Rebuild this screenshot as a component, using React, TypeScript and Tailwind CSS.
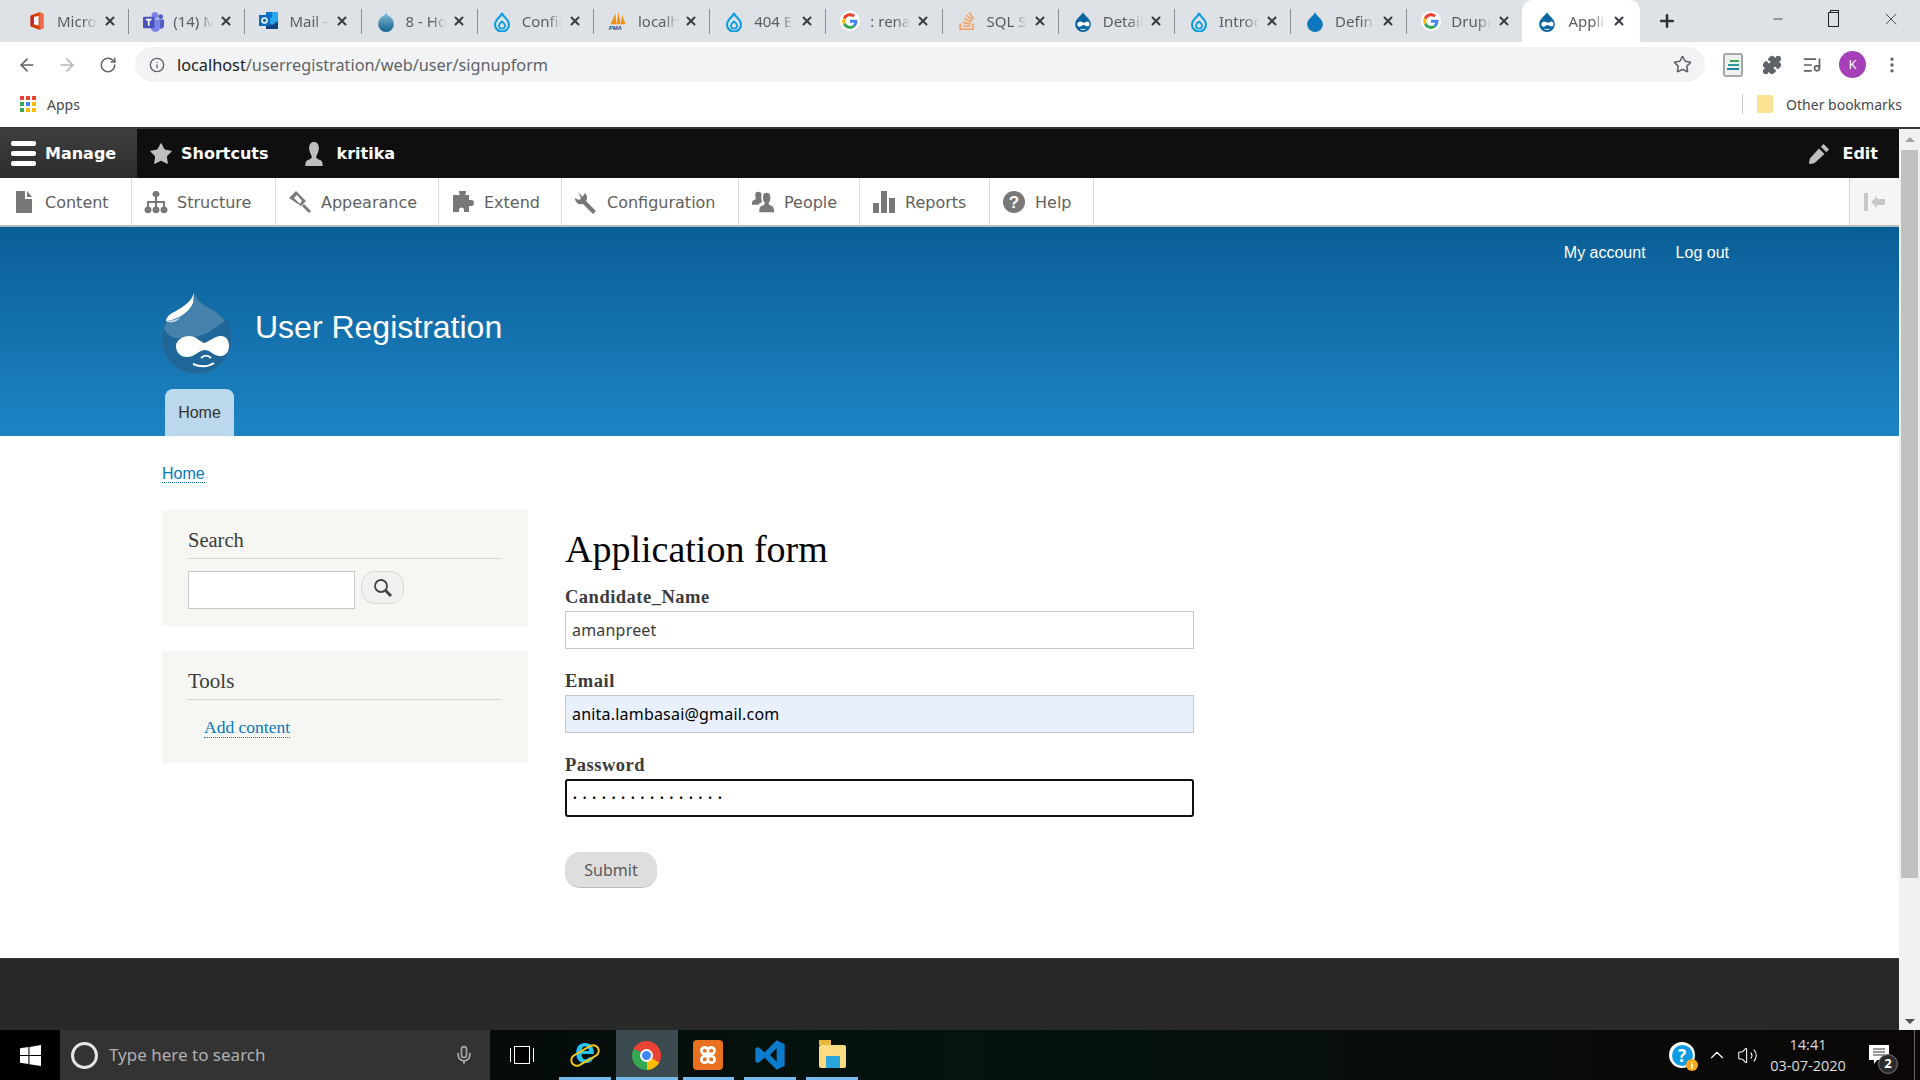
import React from "react";
import { ArrowLeft, ArrowRight, RotateCw, Star, Info, MoreVertical, Plus, Mic, X, Minus, Puzzle, ListMusic, ChevronUp, Volume2 } from "lucide-react";
import { SiStackoverflow } from "react-icons/si";

const GoogleG = () => (
  <svg viewBox="0 0 48 48" className="w-[20px] h-[20px] bg-white rounded-full p-[2px]">
    <path fill="#EA4335" d="M24 9.5c3.5 0 6.7 1.3 9.1 3.5l6.8-6.8C35.800 2.400 30.200 0 24 0 14.600 0 6.500 5.400 2.600 13.200l7.900 6.100C12.400 13.600 17.700 9.500 24 9.500z" />
    <path fill="#4285F4" d="M46.900 24.500c0-1.600-.1-3.100-.4-4.500H24v9h12.900c-.6 3-2.200 5.500-4.700 7.200l7.300 5.700c4.300-4 6.400-9.900 6.400-17.400z" />
    <path fill="#FBBC05" d="M10.500 28.700c-.5-1.500-.8-3-.8-4.700s.3-3.200.8-4.700l-7.900-6.100C.9 16.500 0 20.100 0 24s.9 7.500 2.600 10.800l7.900-6.100z" />
    <path fill="#34A853" d="M24 48c6.500 0 11.900-2.100 15.900-5.800l-7.300-5.700c-2.200 1.500-4.900 2.300-8.600 2.300-6.300 0-11.600-4.100-13.500-9.800l-7.900 6.100C6.500 42.600 14.600 48 24 48z" />
  </svg>
);
const Office = () => (
  <svg viewBox="0 0 20 24" className="w-[16px] h-[20px]">
    <path fill="#d83b01" d="M2 5 13 1l5 2v18l-5 2-11-4z" />
    <path fill="#eb6c4d" d="M13 1l5 2v18l-5 2z" />
    <path fill="#fff" d="M6 7l6-1.500v12L6 16z" />
    <path fill="#c4262e" d="M2 5l4 2v9l-4 3z" />
  </svg>
);
const Teams = () => (
  <svg viewBox="0 0 22 22" className="w-[21px] h-[21px]">
    <circle cx="12.500" cy="4.500" r="3.500" fill="#7b83eb" />
    <circle cx="18.500" cy="6" r="2.500" fill="#5059c9" />
    <path fill="#5059c9" d="M15 9h7v6a3.500 3.500 0 0 1-7 0z" />
    <path fill="#7b83eb" d="M8 9h10v8a5 5 0 0 1-10 0z" />
    <rect x="0" y="6" width="12" height="12" rx="1" fill="#4b53bc" />
    <path fill="none" stroke="#fff" strokeWidth="1.800" d="M3 9h6M6 9v6.500" />
  </svg>
);
const Outlook = () => (
  <svg viewBox="0 0 20 20" className="w-[20px] h-[20px]">
    <rect x="7" y="1" width="12" height="17" fill="#28a8ea" />
    <rect x="7" y="1" width="6" height="6" fill="#0078d4" />
    <path fill="#14447d" d="M7 10l6 4 6-4v8H7z" />
    <rect x="0" y="4" width="11" height="11" fill="#0f6cbd" />
    <circle cx="5.500" cy="9.500" r="2.500" fill="none" stroke="#fff" strokeWidth="1.500" />
  </svg>
);
const DropBall = () => (
  <svg viewBox="0 0 20 24" className="w-[18px] h-[21px]">
    <defs>
      <linearGradient id="dropg" x1="0" y1="0" x2="0" y2="1">
        <stop offset="0" stopColor="#8cc4dc" />
        <stop offset="1" stopColor="#13618f" />
      </linearGradient>
    </defs>
    <path fill="url(#dropg)" d="M10 1c.6 3 2 3.400 4 5 3 2 5 5 5 9a9 9 0 0 1-18 0c0-4 2-7 5-9 2-1.600 3.400-2 4-5z" />
  </svg>
);
const DropBlue = () => (
  <svg viewBox="0 0 20 24" className="w-[18px] h-[21px]">
    <path fill="#0f77bd" d="M10 1c1 4 9 8 9 14a9 9 0 0 1-18 0C1 9 9 5 10 1z" />
  </svg>
);
const DrupalNew = () => (
  <svg viewBox="0 0 20 24" className="w-[18px] h-[21px]" fill="none" stroke="#0c9ee0" strokeWidth="2.400">
    <path d="M10 2c0 4 8 7 8 13.500a8 8 0 0 1-16 0C2 9 10 6 10 2z" />
    <path d="M10 11c0 2-3.500 3-3.500 5.500a3.500 3.500 0 0 0 7 0C13.500 14 10 13 10 11z" strokeWidth="2" />
  </svg>
);
const Pma = () => (
  <svg viewBox="0 0 24 24" className="w-[20px] h-[22px]">
    <path fill="#f29111" d="M3 16 9 3l1 13zM10 16l3-15 2 15zM15 16l2-11 4 11z" />
    <text x="1" y="23" fontSize="7" fontWeight="700" fontStyle="italic" fill="#2a4d8f" fontFamily="Liberation Sans, sans-serif">PMA</text>
  </svg>
);
const Drupal = () => (
  <svg viewBox="0 0 20 24" className="w-[18px] h-[21px]">
    <path fill="#0c659f" d="M10 1c.8 3.500 9 7.500 9 14a9 9 0 0 1-18 0C1 8.500 9 4.500 10 1z" />
    <path fill="#fff" d="M3.500 15c0-2 2-3 3.500-3 2 0 2.500 1.500 4 1.500s2.500-1.500 4-1.500c1.500 0 2.500 1.500 2.500 3 0 2-1.500 3-3 2.500S12 16 10.500 16 7.500 18 6 18c-1.500 0-2.500-1.500-2.500-3z" />
    <path fill="none" stroke="#fff" strokeWidth="1" d="M7 20.500c2 1 4 1 6 0" />
  </svg>
);

const tabs: { icon: React.ReactNode; t: string }[] = [
  { icon: <Office />, t: "Micro" },
  { icon: <Teams />, t: "(14) M" },
  { icon: <Outlook />, t: "Mail -" },
  { icon: <DropBall />, t: "8 - Ho" },
  { icon: <DrupalNew />, t: "Config" },
  { icon: <Pma />, t: "localh" },
  { icon: <DrupalNew />, t: "404 E" },
  { icon: <GoogleG />, t: ": rena" },
  { icon: <SiStackoverflow className="w-[18px] h-[18px] text-[#f4a060]" />, t: "SQL S" },
  { icon: <Drupal />, t: "Detail" },
  { icon: <DrupalNew />, t: "Introd" },
  { icon: <DropBlue />, t: "Defini" },
  { icon: <GoogleG />, t: "Drupa" },
];

const fade = "[mask-image:linear-gradient(to_right,black_65%,transparent)]";

const Tab = ({ icon, t, last }: { icon: React.ReactNode; t: string; last?: boolean }) => (
  <div className="w-[116.200px] h-[42px] shrink-0 flex items-center pl-[12px] relative">
    <div className="w-[24px] flex justify-center shrink-0">{icon}</div>
    <div className={`ml-[8px] w-[40px] overflow-hidden whitespace-nowrap text-[15px] text-[#5a5c60] ${fade}`}>{t}</div>
    <X size={14} strokeWidth={3.500} className="ml-[6px] text-[#3c3e42] shrink-0" />
    {!last && <div className="absolute right-0 top-[9px] h-[25px] w-px bg-[#8b8d90]" />}
  </div>
);

const Wrench = ({ c = "" }: { c?: string }) => (
  <svg viewBox="0 0 24 24" className={c} fill="currentColor">
    <path d="M4 2 9 7v-1l2-3a6 6 0 0 1 1 8l10 10-3 3L9 14a6 6 0 0 1-8-6l4 2 2-2z" />
  </svg>
);
const PersonOne = ({ c = "" }: { c?: string }) => (
  <svg viewBox="0 0 20 24" className={c} fill="currentColor">
    <path d="M10 1c3 0 4.500 2.500 4.500 5.500 0 3-1.500 6-2.500 8 .2 1.500 1 2 3.500 3 2 .8 2.500 2 2.500 5.500H2c0-3.500.5-4.700 2.500-5.500 2.500-1 3.300-1.500 3.500-3-1-2-2.500-5-2.500-8C5.500 3.500 7 1 10 1z" />
  </svg>
);
const Tray = ({ icon, label, w }: { icon: React.ReactNode; label: string; w: number }) => (
  <div style={{ width: w }} className="h-full shrink-0 flex items-center border-r border-[#dcdcdc] pl-[12px] text-[#5f5f5f]">
    <div className="w-[33px] flex shrink-0 text-[#787878]">{icon}</div>
    <span className="text-[16px] mt-[3px] font-['DejaVu_Sans',sans-serif]">{label}</span>
  </div>
);
const ToolbarIconClass = "w-[24px] h-[24px]";

const DrupalLogo = () => (
  <svg viewBox="0 0 72 82" className="w-[72px] h-[82px]">
    <path fill="#4482ac" stroke="#3a6f96" d="M34 1c1 6 6 11 14 15 12 6 22 17 22 31a34.500 34.500 0 0 1-69 0c0-14 9-25 21-31 7-4 11-9 12-15z" />
    <path fill="#1f6699" d="M66 27c3 6 4 13 4 20a34.500 34.500 0 0 1-69 0c0-5 1-8 2-11 3 7 8 11 16 10 14-1 24-1 33-9 6-4 11-7 14-10z" />
    <path fill="#fff" d="M15 54c0-6 7-10 13-10 7 0 10 5 15 7 5-1 10-7 17-7 5 0 8 4 8 10 0 7-5 11-10 10-6-1-9-6-14-6-6 0-10 7-18 7-7 0-11-5-11-11z" />
    <path fill="none" stroke="#fff" strokeWidth="2" d="M32 72c7 3 15 3 21-1M40 66c3-3 7-3 10 0" />
    <path fill="#fff" d="M33 1c-3 10-14 16-22 20-3 2-6 5-6 8 8-1 22-6 27-18z" />
    <path fill="#c5dae8" d="M5 29c5 0 9-1 14-3-3 4-10 6-14 3z" />
  </svg>
);

const Link = ({ children, c = "" }: { children: React.ReactNode; c?: string }) => (
  <a className={`text-[#0678be] border-b border-dotted border-[#0678be] ${c}`}>{children}</a>
);
const serif = "font-['Liberation_Serif',serif]";

const Field = ({ label, children }: { label: string; children: React.ReactNode }) => (
  <div className="flex flex-col">
    <label className={`${serif} font-bold text-[#3b3b3b] text-[18.500px] tracking-[0.5px] leading-[20px] h-[26px] pt-[2px]`}>{label}</label>
    {children}
  </div>
);

const TaskIcon = ({ children, active }: { children: React.ReactNode; active?: boolean }) => (
  <div className={`relative w-[61.800px] h-full flex items-center justify-center ${active ? "bg-[#3b4a4e]" : ""}`}>
    {children}
    <div className={`absolute bottom-0 h-[3px] bg-[#76b9ed] ${active ? "left-0 right-0" : "left-[5px] right-[5px]"}`} />
  </div>
);

export default function App() {
  return (
    <div className="w-[1920px] h-[1080px] overflow-hidden flex flex-col bg-white font-['Noto_Sans',sans-serif]">
      {/* Tab strip */}
      <div className="h-[42px] bg-[#dee1e6] flex shrink-0 pl-[13px]">
        {tabs.map((t, i) => (
          <Tab key={i} icon={t.icon} t={t.t} last={i === tabs.length - 1} />
        ))}
        <div className="w-[118px] h-[42px] bg-white rounded-t-[10px] flex items-center pl-[14px] -ml-[1px] shrink-0">
          <div className="w-[22px] flex justify-center"><Drupal /></div>
          <div className={`ml-[10px] w-[38px] overflow-hidden whitespace-nowrap text-[15px] text-[#5a5c60] ${fade}`}>Applic</div>
          <X size={14} strokeWidth={3.500} className="ml-[6px] text-[#3c3e42]" />
        </div>
        <Plus size={20} strokeWidth={3} className="ml-[17px] mt-[11px] text-[#2f3135]" />
        <div className="ml-auto flex items-start text-[#303236]">
          <Minus size={14} strokeWidth={1.500} className="mt-[12px]" />
          <div className="ml-[43px] mt-[12px] w-[11px] h-[15px] border-[1.500px] border-[#202020] relative bg-[#dee1e6]">
            <div className="absolute -top-[3px] left-[1px] w-[9px] h-[3px] border-t border-x border-[#202020]" />
          </div>
          <X size={20} strokeWidth={1} className="ml-[42px] mt-[9px] mr-[19px]" />
        </div>
      </div>

      {/* Address bar */}
      <div className="h-[45px] flex items-center shrink-0 relative">
        <ArrowLeft size={20} strokeWidth={2} className="ml-[17px] text-[#5f6368]" />
        <ArrowRight size={20} strokeWidth={2} className="ml-[20px] text-[#b4b6b9]" />
        <RotateCw size={18} strokeWidth={2} className="ml-[22px] text-[#5f6368]" />
        <div className="ml-[18px] w-[1570px] h-[35px] rounded-full bg-[#f1f3f4] flex items-center pl-[14px]">
          <Info size={16} className="text-[#5f6368]" />
          <span className="ml-[12px] mt-[1px] text-[16.300px] text-[#5f6368] whitespace-nowrap"><span className="text-[#202124]">localhost</span>/userregistration/web/user/signupform</span>
          <Star size={19} className="ml-auto mr-[13px] text-[#5f6368]" />
        </div>
        <div className="ml-[18px] w-[20px] h-[24px] rounded-[3px] bg-[#eef2ee] border-[2px] border-[#a6a8a8] flex flex-col justify-center items-end gap-[2px] px-[2px]">
          <div className="w-[9px] h-[2px] bg-[#41a35a]" /><div className="w-[11px] h-[2px] bg-[#2e9a9a]" /><div className="w-[12px] h-[2px] bg-[#2a7fa0]" />
        </div>
        <Puzzle size={20} fill="#5f6368" className="ml-[19px] text-[#5f6368]" />
        <ListMusic size={20} className="ml-[20px] text-[#5f6368]" />
        <div className="ml-[17px] w-[27px] h-[27px] rounded-full bg-[#a640b8] text-white text-[13px] flex items-center justify-center">K</div>
        <MoreVertical size={20} className="ml-[16px] text-[#5f6368]" />
      </div>

      {/* Bookmarks */}
      <div className="h-[42px] flex items-center shrink-0 pl-[20px] pb-[6px] border-b-[2px] border-[#3a3a3a]">
        <div className="grid grid-cols-3 gap-[2px] w-[16px]">
          {["#ea4335","#ea4335","#ea4335","#34a853","#4285f4","#fbbc05","#34a853","#fbbc05","#fbbc05"].map((c, i) => (
            <div key={i} className="w-[4px] h-[4px]" style={{ background: c }} />
          ))}
        </div>
        <span className="ml-[11px] text-[14px] text-[#46484c]">Apps</span>
        <div className="ml-auto w-px h-[20px] bg-[#c8c8c8]" />
        <div className="ml-[14px] w-[16px] h-[18px] bg-[#fde293] rounded-[2px]" />
        <span className="ml-[13px] mr-[18px] text-[14px] text-[#46484c]">Other bookmarks</span>
      </div>

      {/* Page + scrollbar */}
      <div className="flex-1 flex min-h-0">
        <div className="w-[1899px] flex flex-col min-h-0 overflow-hidden">
          {/* Admin bar */}
          <div className="h-[49px] bg-[#0f0f0f] flex items-stretch text-white font-bold text-[16px] shrink-0 font-['DejaVu_Sans',sans-serif]">
            <div className="w-[137px] bg-gradient-to-b from-[#3f3f3f] to-[#2d2d2d] flex items-center pl-[11px]">
              <div className="flex flex-col gap-[5px]">
                <div className="w-[25px] h-[5px] rounded-[2px] bg-white" /><div className="w-[25px] h-[5px] rounded-[2px] bg-white" /><div className="w-[25px] h-[5px] rounded-[2px] bg-white" />
              </div>
              <span className="ml-[9px]">Manage</span>
            </div>
            <div className="flex items-center pl-[11px]">
              <Star size={26} fill="#bebebe" strokeWidth={0} />
              <span className="ml-[7px]">Shortcuts</span>
            </div>
            <div className="flex items-center pl-[33px]">
              <PersonOne c="w-[24px] h-[26px] text-[#bebebe]" />
              <span className="ml-[11px]">kritika</span>
            </div>
            <div className="ml-auto flex items-center pr-[21px]">
              <svg viewBox="0 0 24 24" className="w-[22px] h-[22px]" fill="#bebebe"><path d="M17 1l6 6-3 3-6-6zM12 6l6 6L7 22l-5 1-1-1 1-5z" /></svg>
              <span className="ml-[12px]">Edit</span>
            </div>
          </div>
          {/* Tray */}
          <div className="h-[49px] bg-white border-b-[2px] border-[#b8bcbf] flex shrink-0">
            <Tray w={132} label="Content" icon={<svg viewBox="0 0 24 24" className={ToolbarIconClass} fill="currentColor"><path d="M4 1h9v8h7v14H4zM15 1l5 6h-5z" /></svg>} />
            <Tray w={144} label="Structure" icon={<svg viewBox="0 0 24 24" className={ToolbarIconClass} fill="currentColor"><path d="M12 1a3 3 0 0 1 1 6v4h8v5.500a3.500 3.500 0 1 1-2 0V13h-6v3.500a3.500 3.500 0 1 1-2 0V13H5v3.500a3.500 3.500 0 1 1-2 0V11h8V7a3 3 0 0 1 1-6z" /></svg>} />
            <Tray w={163} label="Appearance" icon={<svg viewBox="0 0 24 24" className={ToolbarIconClass} fill="currentColor"><path d="M8 1l10 10-5 5L1 8zM9 5 6 8l6 6 2-3zM14 16l2-2 7 7-2 2z" fillRule="evenodd" /></svg>} />
            <Tray w={123} label="Extend" icon={<svg viewBox="0 0 24 24" className={ToolbarIconClass} fill="currentColor"><path d="M8 1h7v2l-1 2h4v5h2a3 3 0 0 1 0 6h-2v6h-5v-2a2.500 2.500 0 0 0-5 0v2H2V5h7L8 3z" /></svg>} />
            <Tray w={177} label="Configuration" icon={<Wrench c={ToolbarIconClass} />} />
            <Tray w={121} label="People" icon={<svg viewBox="0 0 26 24" className={ToolbarIconClass} fill="currentColor"><path d="M17 2c3 0 4 2 4 5s-1 5-2 6c0 2 1 2 3 3s3 2 3 7H9c0-5 1-6 3-7s3-1 3-3c-1-1-2-3-2-6s1-5 4-5zM8 1c2 0 3 1 3.500 2.500C11 6 11 9 12 12c-1 1-3 1-4 3H1c0-4 1-5 3-5.500C5 9 5 8 5 7 4 3 5 1 8 1z" /></svg>} />
            <Tray w={130} label="Reports" icon={<svg viewBox="0 0 24 24" className={ToolbarIconClass} fill="currentColor"><path d="M1 13h6v10H1zM9 1h6v22H9zM17 8h6v15h-6z" /></svg>} />
            <Tray w={104} label="Help" icon={<svg viewBox="0 0 24 24" className={ToolbarIconClass}><circle cx="12" cy="12" r="11" fill="currentColor" /><text x="12" y="18" textAnchor="middle" fontSize="17" fontWeight="700" fill="#fff" fontFamily="Liberation Sans, sans-serif">?</text></svg>} />
            <div className="ml-auto w-[50px] bg-[#f5f5f5] border-l border-[#d0d0d0] flex items-center justify-center gap-[3px]">
              <div className="w-[4px] h-[18px] bg-[#c8c8c8]" />
              <svg viewBox="0 0 14 12" className="w-[14px] h-[12px]" fill="#c8c8c8"><path d="M0 6 6 0v3h8v6H6v3z" /></svg>
            </div>
          </div>

          {/* Blue header */}
          <div className="h-[209px] shrink-0 bg-gradient-to-b from-[#0a5e97] to-[#1d84c4] px-[162px] flex flex-col relative font-['Liberation_Sans',sans-serif]">
            <div className="flex justify-end gap-[30px] pt-[15px] pr-[8px] text-white text-[16px] leading-[22px]">
              <span>My account</span><span>Log out</span>
            </div>
            <div className="flex items-center mt-[28px] h-[82px] -ml-[1px]">
              <DrupalLogo />
              <span className="ml-[22px] text-[32px] text-white leading-none -mt-[12px]">User Registration</span>
            </div>
            <div className="mt-auto w-[69px] h-[47px] ml-[3px] rounded-t-[8px] bg-[#bcd8ec] flex items-center justify-center text-[16px] text-[#333]">Home</div>
          </div>

          {/* Body */}
          <div className="h-[522px] shrink-0 px-[162px] flex flex-col">
            <div className="pt-[27px] h-[74px] font-['Liberation_Sans',sans-serif] text-[16px] leading-[22px]"><Link>Home</Link></div>
            <div className="flex">
              <aside className={`w-[366px] shrink-0 ${serif} flex flex-col gap-[25px]`}>
                <div className="h-[116px] bg-[#f6f6f2] px-[26px] pt-[19px]">
                  <div className="h-[30px] border-b border-[#d4d4d0] text-[20.500px] leading-[22px] text-[#3b3b3b] w-[313px]">Search</div>
                  <div className="flex mt-[12px]">
                    <div className="w-[167px] h-[38px] bg-white border border-[#c8c8c8]" />
                    <div className="ml-[6px] w-[43px] h-[33px] rounded-[14px] bg-[#f1f1ef] border border-[#d8d8d8] flex items-center justify-center">
                      <svg viewBox="0 0 20 20" className="w-[20px] h-[20px]" fill="none" stroke="#444"><circle cx="8" cy="8" r="6" strokeWidth="1.800" /><path d="M12.500 12.500 18 18" strokeWidth="3" /></svg>
                    </div>
                  </div>
                </div>
                <div className="h-[112px] bg-[#f6f6f2] px-[26px] pt-[19px]">
                  <div className="h-[30px] border-b border-[#d4d4d0] text-[21px] leading-[22px] text-[#3b3b3b] w-[313px]">Tools</div>
                  <div className="pl-[16px] pt-[16px] text-[17.500px] leading-[22px]"><Link>Add content</Link></div>
                </div>
              </aside>
              <main className="ml-[37px] w-[629px] flex flex-col">
                <h1 className={`${serif} text-[38px] leading-[40px] text-black mt-[19px] h-[56px]`}>Application form</h1>
                <Field label="Candidate_Name">
                  <input readOnly value="amanpreet" className="h-[38px] border border-[#c8c8c8] px-[6px] text-[16px] text-[#3b3b3b] outline-none tracking-[0.2px]" />
                </Field>
                <div className="h-[20px]" />
                <Field label="Email">
                  <input readOnly value="anita.lambasai@gmail.com" className="h-[38px] border border-[#c8c8c8] bg-[#e8f0fe] px-[6px] text-[16px] text-black outline-none tracking-[0.2px]" />
                </Field>
                <div className="h-[20px]" />
                <Field label="Password">
                  <input readOnly type="password" value="aaaaaaaaaaaaaaaa" className="h-[38px] border-[2px] border-[#101010] rounded-[3px] px-[6px] text-[10px] text-black outline-none tracking-[5.900px]" />
                </Field>
                <button className="mt-[35px] w-[92px] h-[36px] rounded-[15px] bg-[#dedede] border-b border-[#bcbcbc] text-[16px] text-[#5a5a5a]">Submit</button>
              </main>
            </div>
          </div>

          {/* Footer */}
          <div className="flex-1 bg-[#292929] border-t border-[#333]" />
        </div>
        <div className="w-[21px] bg-[#f1f1f1] flex flex-col items-center relative shrink-0">
          <div className="h-[21px] flex items-center"><div className="w-0 h-0 border-x-[5px] border-x-transparent border-b-[5px] border-b-[#a3a3a3]" /></div>
          <div className="w-[17px] h-[728px] bg-[#c1c1c1]" />
          <div className="mt-auto h-[17px] flex items-center"><div className="w-0 h-0 border-x-[5px] border-x-transparent border-t-[5px] border-t-[#505050]" /></div>
        </div>
      </div>

      {/* Taskbar */}
      <div className="h-[50px] shrink-0 bg-gradient-to-r from-[#050505] via-[#04140f] to-[#0a0706] flex items-stretch text-white">
        <div className="w-[60px] bg-black flex items-center justify-center">
          <svg viewBox="0 0 20 20" className="w-[21px] h-[21px]" fill="#fff"><path d="M0 3l8-1v7.500H0zM9 1.800 20 0v9.500H9zM0 10.500h8V18l-8-1zM9 10.500h11V20L9 18.300z" /></svg>
        </div>
        <div className="w-[430px] bg-[#333333] flex items-center pl-[11px] pr-[16px] text-[#b0b0b0] text-[17px]">
          <div className="w-[27px] h-[27px] rounded-full border-[3px] border-[#e4e4e4]" />
          <span className="ml-[11px] whitespace-nowrap">Type here to search</span>
          <Mic size={20} className="ml-auto text-[#a8a8a8]" />
        </div>
        <div className="w-[64px] flex items-center justify-center">
          <div className="w-[24px] h-[14px] flex items-center justify-center border-x border-white"><div className="w-[16px] h-[18px] border-[1.500px] border-white bg-black" /></div>
        </div>
        <TaskIcon>
          <span className="text-[36px] leading-none font-['Liberation_Sans',sans-serif] text-[#27c4f0] font-bold -mt-[8px]">e</span>
          <div className="absolute w-[32px] h-[13px] rounded-full border-[2px] border-[#f0c419] -rotate-[30deg]" />
        </TaskIcon>
        <TaskIcon active>
          <div className="w-[29px] h-[29px] rounded-full flex items-center justify-center" style={{ background: "conic-gradient(#ea4335 0 33%, #fbbc05 33% 50%, #34a853 50% 83%, #ea4335 83%)" }}>
            <div className="w-[13px] h-[13px] rounded-full bg-[#4285f4] border-[2px] border-white" />
          </div>
        </TaskIcon>
        <TaskIcon>
          <div className="w-[30px] h-[30px] rounded-[4px] bg-[#e8701f] flex items-center justify-center">
            <svg viewBox="0 0 20 20" className="w-[22px] h-[22px]" fill="none" stroke="#fff" strokeWidth="2.500"><path d="M7 3a3 3 0 1 0 0 6h6a3 3 0 1 0-3-3v8a3 3 0 1 0 3-3H7a3 3 0 1 0 3 3V6a3 3 0 0 0-3-3z" /></svg>
          </div>
        </TaskIcon>
        <TaskIcon>
          <svg viewBox="0 0 24 24" className="w-[32px] h-[32px]"><path fill="#0a7ccb" d="M17 1l6 3v16l-6 3-9-9-5 4-2-1V7l2-1 5 4zM17 7l-5 5 5 5z" fillRule="evenodd" /></svg>
        </TaskIcon>
        <TaskIcon>
          <div className="w-[27px] h-[23px] bg-[#fcdc80] relative mt-[3px] rounded-[2px]">
            <div className="absolute -top-[5px] left-0 w-[12px] h-[5px] bg-[#e8b93a]" />
            <div className="absolute bottom-0 left-[7px] w-[14px] h-[12px] bg-[#2aa5dd]" />
          </div>
        </TaskIcon>

        <div className="ml-auto flex items-center">
          <div className="relative w-[26px] h-[26px] rounded-full bg-white flex items-center justify-center">
            <div className="w-[21px] h-[21px] rounded-full bg-[#0e9be3] text-white font-bold text-[17px] leading-none flex items-center justify-center">?</div>
            <div className="absolute -right-[3px] -bottom-[3px] w-[12px] h-[12px] rounded-full bg-[#f4a81c] text-white font-bold text-[9px] leading-none flex items-center justify-center">i</div>
          </div>
          <ChevronUp size={22} strokeWidth={1.200} className="ml-[11px] text-white" />
          <Volume2 size={21} strokeWidth={1.200} className="ml-[9px] text-white" />
          <div className="ml-[12px] w-[76px] text-center text-[14.500px] leading-[21px] text-[#dcdcdc] font-['Open_Sans',sans-serif]">
            <div>14:41</div><div>03-07-2020</div>
          </div>
          <div className="relative ml-[23px] mr-[16px] w-[29px] h-[30px]">
            <svg viewBox="0 0 20 19" className="absolute left-0 top-[5px] w-[20px] h-[19px]">
              <path fill="#fff" d="M0 0h20v15H8l-3 4v-4H0z" />
              <path stroke="#333" strokeWidth="1" d="M4 4h12M4 7h12M4 10h12" />
            </svg>
            <div className="absolute left-[9px] top-[14px] w-[20px] h-[20px] rounded-full bg-[#2c2c2c] border border-[#777] text-white text-[13px] font-bold flex items-center justify-center">2</div>
          </div>
          <div className="w-px h-full bg-[#666]" />
          <div className="w-[5px]" />
        </div>
      </div>
    </div>
  );
}
